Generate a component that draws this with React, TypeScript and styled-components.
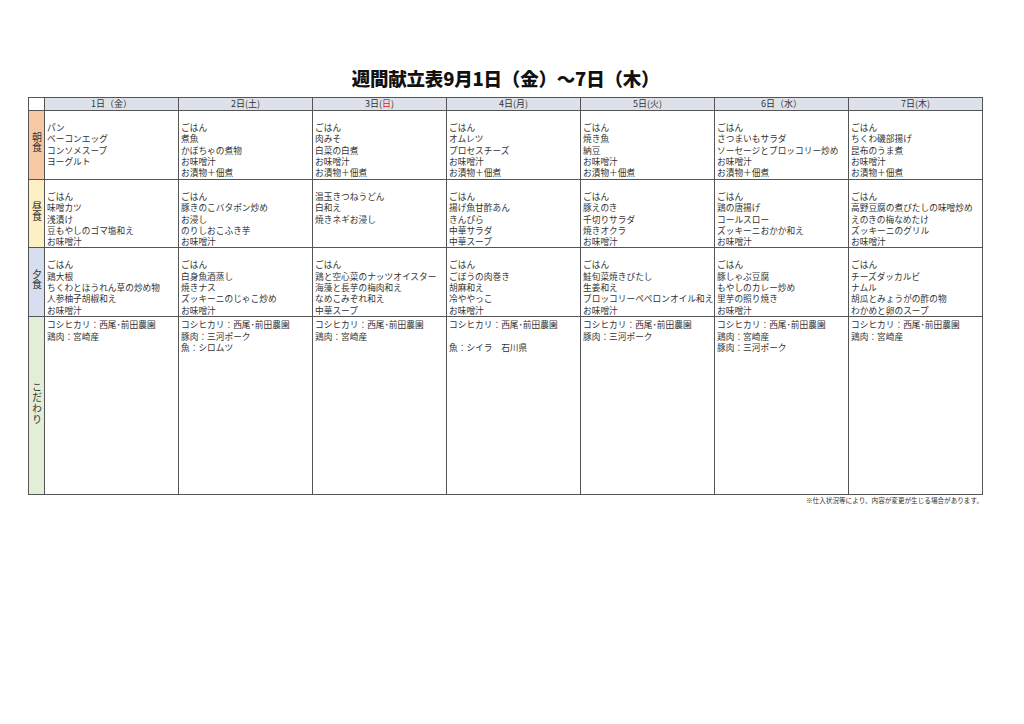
import { createGlobalStyle, styled } from 'styled-components';

const GlobalStyle = createGlobalStyle`
  html, body {
    margin: 0;
    padding: 0;
    background: #fff;
  }
  body {
    font-family: "Noto Sans CJK JP", "Noto Sans", sans-serif;
    color: #333;
  }
`;

const Page = styled.div`
  width: 1024px;
  height: 724px;
  padding: 66px 0 0 28px;
  box-sizing: border-box;
`;

const Sheet = styled.div`
  width: 955px;
  display: flex;
  flex-direction: column;
  align-items: center;
`;

const Title = styled.h1`
  margin: 0 0 6px;
  font-size: 18.5px;
  line-height: 25px;
  font-weight: 900;
  color: #111;
  letter-spacing: -0.2px;
`;

const Table = styled.table`
  width: 100%;
  table-layout: fixed;
  border-collapse: collapse;
  border: 1.5px solid #555;
`;

const Cell = styled.td<{ $pad?: number }>`
  border: 1px solid #555;
  vertical-align: top;
  padding: ${(p) => p.$pad ?? 11}px 0 0 2px;
  font-size: 8.7px;
  line-height: 11.3px;
  white-space: nowrap;
  color: #333;
`;

const HeadCell = styled.th<{ $blank?: boolean }>`
  border: 1px solid #555;
  height: 12px;
  padding: 0;
  font-size: 9px;
  line-height: 12px;
  font-weight: 400;
  color: #333;
  background: ${(p) => (p.$blank ? '#fff' : '#dde2ea')};
`;

const LabelCell = styled.td<{ $bg: string }>`
  border: 1px solid #555;
  padding: 0;
  background: ${(p) => p.$bg};
  text-align: center;
  vertical-align: middle;
`;

const LabelText = styled.span`
  display: inline-block;
  writing-mode: vertical-rl;
  text-orientation: upright;
  font-size: 10px;
  line-height: 14px;
  letter-spacing: 0.7px;
  color: #333;
`;

const Line = styled.div`
  min-height: 11.3px;
`;

const Red = styled.span`
  color: #e8141c;
`;

const Note = styled.div`
  align-self: flex-end;
  margin-top: 1px;
  font-size: 6.6px;
  line-height: 9px;
  color: #333;
`;

type Day = {
  head: React.ReactNode;
  meals: string[][];
};

const days: Day[] = [
  {
    head: '1日（金）',
    meals: [
      ['パン', 'ベーコンエッグ', 'コンソメスープ', 'ヨーグルト'],
      ['ごはん', '味噌カツ', '浅漬け', '豆もやしのゴマ塩和え', 'お味噌汁'],
      ['ごはん', '鶏大根', 'ちくわとほうれん草の炒め物', '人参柚子胡椒和え', 'お味噌汁'],
      ['コシヒカリ：西尾･前田農園', '鶏肉：宮崎産'],
    ],
  },
  {
    head: '2日(土)',
    meals: [
      ['ごはん', '煮魚', 'かぼちゃの煮物', 'お味噌汁', 'お漬物＋佃煮'],
      ['ごはん', '豚きのこバタポン炒め', 'お浸し', 'のりしおこふき芋', 'お味噌汁'],
      ['ごはん', '白身魚酒蒸し', '焼きナス', 'ズッキーニのじゃこ炒め', 'お味噌汁'],
      ['コシヒカリ：西尾･前田農園', '豚肉：三河ポーク', '魚：シロムツ'],
    ],
  },
  {
    head: (
      <>
        3日(<Red>日</Red>)
      </>
    ),
    meals: [
      ['ごはん', '肉みそ', '白菜の白煮', 'お味噌汁', 'お漬物＋佃煮'],
      ['温玉きつねうどん', '白和え', '焼きネギお浸し'],
      ['ごはん', '鶏と空心菜のナッツオイスター', '海藻と長芋の梅肉和え', 'なめこみぞれ和え', '中華スープ'],
      ['コシヒカリ：西尾･前田農園', '鶏肉：宮崎産'],
    ],
  },
  {
    head: '4日(月)',
    meals: [
      ['ごはん', 'オムレツ', 'プロセスチーズ', 'お味噌汁', 'お漬物＋佃煮'],
      ['ごはん', '揚げ魚甘酢あん', 'きんぴら', '中華サラダ', '中華スープ'],
      ['ごはん', 'ごぼうの肉巻き', '胡麻和え', '冷ややっこ', 'お味噌汁'],
      ['コシヒカリ：西尾･前田農園', '', '魚：シイラ　石川県'],
    ],
  },
  {
    head: '5日(火)',
    meals: [
      ['ごはん', '焼き魚', '納豆', 'お味噌汁', 'お漬物＋佃煮'],
      ['ごはん', '豚えのき', '千切りサラダ', '焼きオクラ', 'お味噌汁'],
      ['ごはん', '鮭旬菜焼きびたし', '生姜和え', 'ブロッコリーペペロンオイル和え', 'お味噌汁'],
      ['コシヒカリ：西尾･前田農園', '豚肉：三河ポーク'],
    ],
  },
  {
    head: '6日（水）',
    meals: [
      ['ごはん', 'さつまいもサラダ', 'ソーセージとブロッコリー炒め', 'お味噌汁', 'お漬物＋佃煮'],
      ['ごはん', '鶏の唐揚げ', 'コールスロー', 'ズッキーニおかか和え', 'お味噌汁'],
      ['ごはん', '豚しゃぶ豆腐', 'もやしのカレー炒め', '里芋の照り焼き', 'お味噌汁'],
      ['コシヒカリ：西尾･前田農園', '鶏肉：宮崎産', '豚肉：三河ポーク'],
    ],
  },
  {
    head: '7日(木)',
    meals: [
      ['ごはん', 'ちくわ磯部揚げ', '昆布のうま煮', 'お味噌汁', 'お漬物＋佃煮'],
      ['ごはん', '高野豆腐の煮びたしの味噌炒め', 'えのきの梅なめたけ', 'ズッキーニのグリル', 'お味噌汁'],
      ['ごはん', 'チーズダッカルビ', 'ナムル', '胡瓜とみょうがの酢の物', 'わかめと卵のスープ'],
      ['コシヒカリ：西尾･前田農園', '鶏肉：宮崎産'],
    ],
  },
];

const rows = [
  { label: '朝食', bg: '#f6c8a4', height: 69, pad: 11 },
  { label: '昼食', bg: '#fdf0c4', height: 68, pad: 11 },
  { label: '夕食', bg: '#d7def0', height: 69, pad: 11 },
  { label: 'こだわり', bg: '#e3eed8', height: 178, pad: 2 },
];

const App = () => {
  return (
    <Page>
      <GlobalStyle />
      <Sheet>
        <Title>週間献立表9月1日（金）～7日（木）</Title>
        <Table>
          <colgroup>
            <col style={{ width: 16 }} />
            {days.map((_, i) => (
              <col key={i} />
            ))}
          </colgroup>
          <thead>
            <tr>
              <HeadCell $blank />
              {days.map((d, i) => (
                <HeadCell key={i}>{d.head}</HeadCell>
              ))}
            </tr>
          </thead>
          <tbody>
            {rows.map((r, ri) => (
              <tr key={ri} style={{ height: r.height }}>
                <LabelCell $bg={r.bg}>
                  <LabelText>{r.label}</LabelText>
                </LabelCell>
                {days.map((d, di) => (
                  <Cell key={di} $pad={r.pad}>
                    {d.meals[ri].map((item, k) => (
                      <Line key={k}>{item}</Line>
                    ))}
                  </Cell>
                ))}
              </tr>
            ))}
          </tbody>
        </Table>
        <Note>※仕入状況等により、内容が変更が生じる場合があります。</Note>
      </Sheet>
    </Page>
  );
};

export default App;
